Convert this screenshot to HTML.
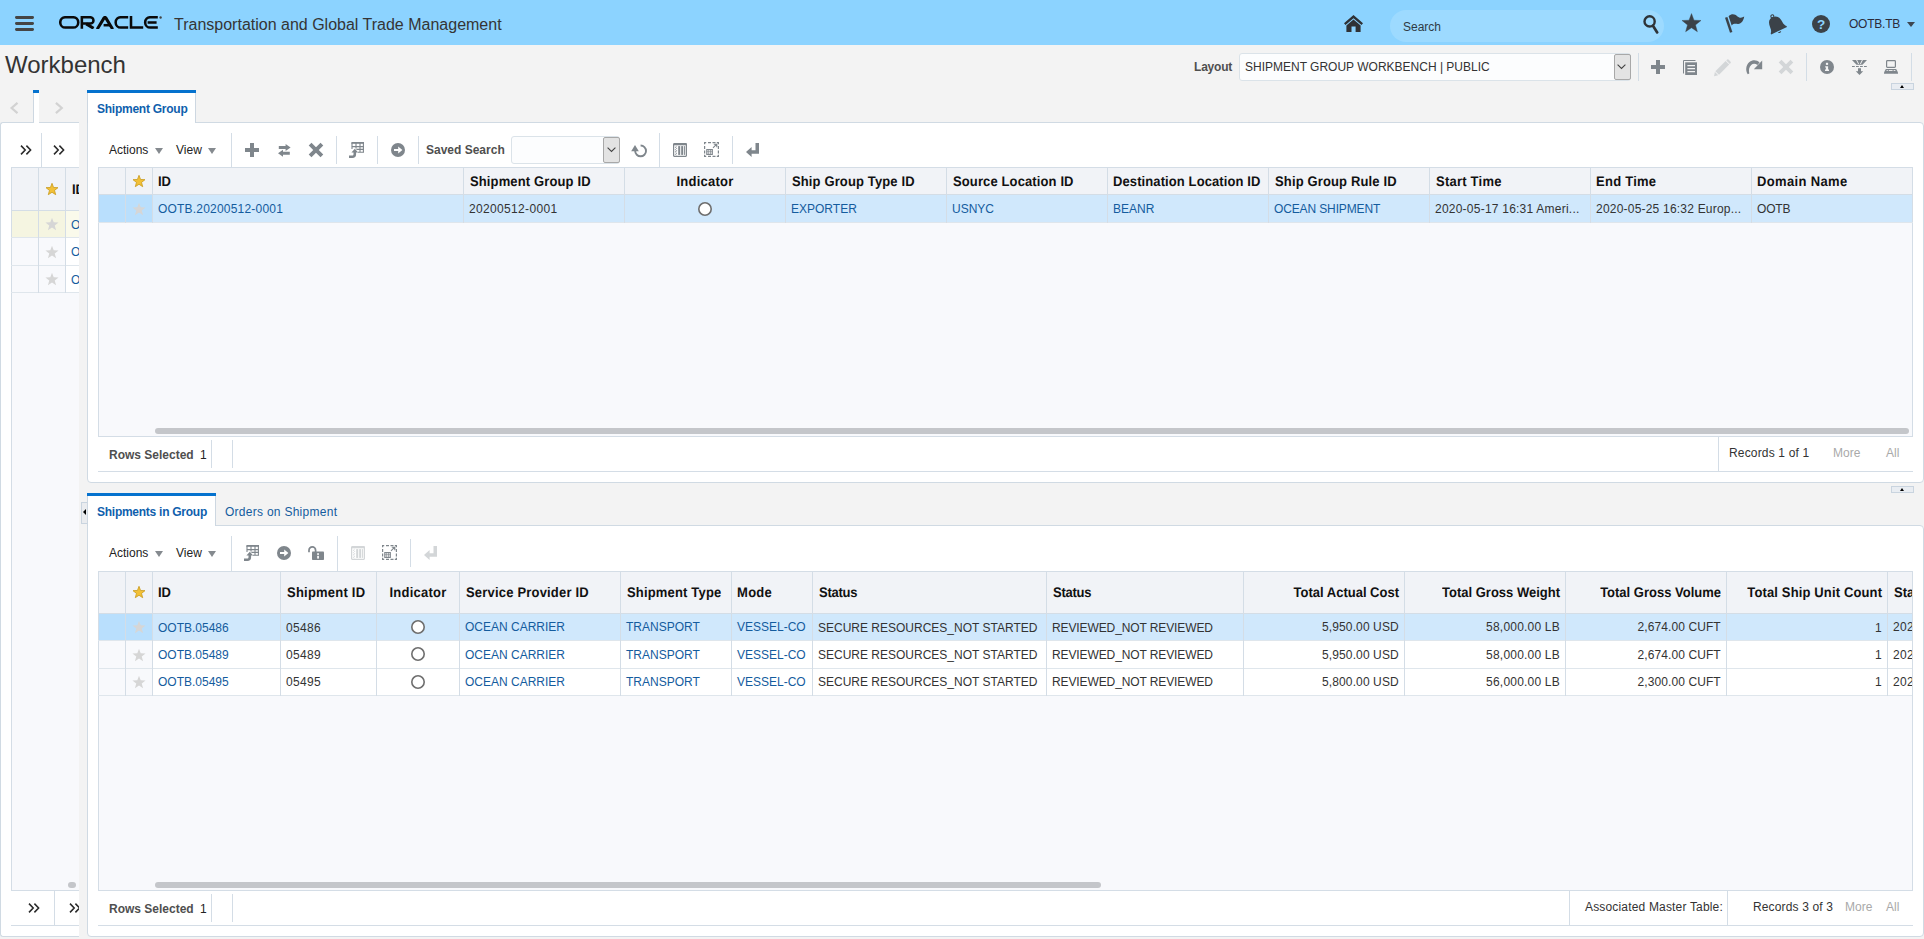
<!DOCTYPE html>
<html><head><meta charset="utf-8"><title>Workbench</title><style>
*{box-sizing:border-box}
html,body{margin:0;padding:0}
body{width:1924px;height:939px;overflow:hidden;background:#f3f3f3;font-family:"Liberation Sans",sans-serif;font-size:12px;color:#333;position:relative}
.a{position:absolute}
.t{position:absolute;white-space:nowrap;line-height:14px;height:14px}
.b{font-weight:bold}
.lk{color:#145c9e}
.h{position:absolute;height:1px;background:#d4dde6}
.v{position:absolute;width:1px;background:#d4dde6}
.hd{font-weight:bold;font-size:13px;color:#111;line-height:16px;height:16px;text-rendering:geometricPrecision;transform:scale(1,1.075);transform-origin:0 12.5px}
.panel{position:absolute;background:#fff;border:1px solid #d0dae3}
svg{position:absolute;overflow:visible}
.dis{color:#a9a9a9}
</style></head><body>
<div class="a" style="left:0px;top:0px;width:1924px;height:45px;background:#8cd3ff;"></div>
<svg style="left:15px;top:16px" width="19" height="15" viewBox="0 0 19 15"><rect x="0" y="0.1" width="19" height="2.8" rx="1.4" fill="#454545"/><rect x="0" y="6.1" width="19" height="2.8" rx="1.4" fill="#454545"/><rect x="0" y="12.1" width="19" height="2.8" rx="1.4" fill="#454545"/></svg>
<div class="a" style="left:59px;top:16px;width:104px;height:12.8px;overflow:hidden"><svg style="left:0px;top:0px" width="104" height="13" viewBox="0 0 104 13"><rect x="1.25" y="1.25" width="18" height="10.3" rx="5.15" fill="none" stroke="#0a0a0a" stroke-width="2.55"/><path d="M22.85 12.8V1.25H31.3a3.15 3.15 0 0 1 0 6.3H24" fill="none" stroke="#0a0a0a" stroke-width="2.55"/><path d="M27.2 7.9L34.6 12.3" fill="none" stroke="#0a0a0a" stroke-width="3"/><path d="M38.2 13.2L45.1 1.9a0.95 0.95 0 0 1 1.7 0L53.7 13.2" fill="none" stroke="#0a0a0a" stroke-width="3" stroke-linejoin="round"/><path d="M44.6 9.2H51.6" fill="none" stroke="#0a0a0a" stroke-width="2.55"/><path d="M69.2 1.25H61.8a5.15 5.15 0 0 0 0 10.3H69.2" fill="none" stroke="#0a0a0a" stroke-width="2.55"/><path d="M72 0V11.55H84.2" fill="none" stroke="#0a0a0a" stroke-width="2.55"/><path d="M98.8 1.25H91.3a5.15 5.15 0 0 0 0 10.3H98.8M88.6 6.4H97.6" fill="none" stroke="#0a0a0a" stroke-width="2.55"/><circle cx="101.6" cy="1.5" r="1.2" fill="#444"/></svg></div>
<div class="t " style="left:174px;top:14.5px;font-size:16px;line-height:20px;height:20px;color:#353535">Transportation and Global Trade Management</div>
<svg style="left:1344px;top:15px" width="19" height="17" viewBox="0 0 19 17"><path d="M9.5 0L0 8.2L1.5 10L9.5 3.2L17.5 10L19 8.2Z" fill="#2f3236"/><path d="M9.5 4.4L2.4 10.4V17H7.5V11.4H11.6V17H16.6V10.4Z" fill="#2f3236"/></svg>
<div class="a" style="left:1390px;top:10px;width:274px;height:32px;background:#9ddaff;border-radius:16px"></div>
<div class="t " style="left:1403px;top:19.5px;color:#2f3a44">Search</div>
<svg style="left:1643px;top:15px" width="16" height="19" viewBox="0 0 16 19"><circle cx="6.6" cy="6.4" r="5.1" fill="none" stroke="#2e3338" stroke-width="2.4"/><path d="M9.8 10.6L14.2 17.4" stroke="#2e3338" stroke-width="2.7" stroke-linecap="round"/></svg>
<svg style="left:1682px;top:14.3px" width="19" height="18" viewBox="0 0 19 18"><path d="M9.50 -0.40L11.97 6.20L19.01 6.51L13.49 10.90L15.38 17.69L9.50 13.80L3.62 17.69L5.51 10.90L-0.01 6.51L7.03 6.20Z" fill="#3b4249" stroke="#3b4249" stroke-width="0.4" stroke-linejoin="round"/></svg>
<svg style="left:1725px;top:14px" width="20" height="19" viewBox="0 0 20 19"><path d="M1.2 3.4L6.2 18.4" stroke="#3b4249" stroke-width="2.5" stroke-linecap="butt"/><path d="M3.6 2.2C7 -1 10 0.2 12.5 2.4C15 4.4 17.2 3.8 19.2 2.6C18.6 6.6 16.4 10 13 9.9C10.4 9.7 8.6 9.2 6.7 11.4Z" fill="#3b4249"/></svg>
<svg style="left:1769px;top:14px" width="19" height="19" viewBox="0 0 19 19"><g transform="translate(-2.6 -0.3) scale(1.09) rotate(-25 9 10)"><circle cx="9" cy="1.6" r="1.4" fill="none" stroke="#3b4249" stroke-width="1"/><path d="M9 2.4C4.4 2.4 3 6 2.9 10C2.8 12.6 2.2 14 1 15.2V16.2H17V15.2C15.8 14 15.2 12.6 15.1 10C15 6 13.6 2.4 9 2.4Z" fill="#3b4249"/><path d="M7.4 17.2a1.7 1.7 0 0 0 3.2 0Z" fill="#3b4249"/></g></svg>
<svg style="left:1812px;top:15px" width="18" height="18" viewBox="0 0 18 18"><circle cx="9" cy="9" r="9" fill="#3b4249"/><text x="9" y="13.6" font-family="Liberation Sans" font-weight="bold" font-size="13.5" text-anchor="middle" fill="#8cd3ff">?</text></svg>
<div class="t " style="left:1849px;top:17.0px;color:#2b2b3a;letter-spacing:-0.24px">OOTB.TB</div>
<div class="a" style="left:1906.8px;top:21.9px;width:0;height:0;border-left:4.7px solid transparent;border-right:4.7px solid transparent;border-top:5.2px solid #3d4650"></div>
<div class="t " style="left:5px;top:50.0px;font-size:24px;line-height:30px;height:30px;color:#333">Workbench</div>
<div class="t b" style="left:1194px;top:60.0px;color:#4f4f4f;letter-spacing:-0.2px">Layout</div>
<div class="a" style="left:1239px;top:53px;width:391.5px;height:28px;background:#fcfdfe;border:1px solid #dbe3e9;border-radius:3px"></div>
<div class="t " style="left:1245px;top:60.0px;color:#333">SHIPMENT GROUP WORKBENCH | PUBLIC</div>
<div class="a" style="left:1613.5px;top:54px;width:17px;height:26px;background:#e3e3e3;border:1px solid #a8a8a8;border-radius:2px"></div>
<svg style="left:1617.3px;top:64.2px" width="9" height="6" viewBox="0 0 9 6"><path d="M0.6 0.6L4.5 4.4L8.4 0.6" fill="none" stroke="#444" stroke-width="1.1"/></svg>
<div class="v" style="left:1637.5px;top:53px;height:28px;background:#d3dde6"></div>
<svg style="left:1651px;top:60px" width="14" height="14" viewBox="0 0 14 14"><rect x="5.0" y="0" width="4" height="14" fill="#7f868c"/><rect x="0" y="5.0" width="14" height="4" fill="#7f868c"/></svg>
<svg style="left:1683px;top:60px" width="14" height="15" viewBox="0 0 14 15"><path d="M0.5 13.5V0.5H12.5" fill="none" stroke="#7f868c" stroke-width="1"/><rect x="2.2" y="2.3" width="11.8" height="12.7" fill="#7f868c"/><path d="M4.4 5.6H12M4.4 8.6H12M4.4 11.6H12" stroke="#f3f3f3" stroke-width="1.3"/></svg>
<svg style="left:1714px;top:59.8px" width="17" height="17" viewBox="0 0 17 17"><path d="M11.6 1L15.2 4.6L5 14.8L1.4 11.2Z" fill="#d3d6d8"/><path d="M0.9 12L4.2 15.3L0 16.2Z" fill="#d3d6d8"/><path d="M12.3 0.4L13.1 -0.4a1 1 0 0 1 1.4 0L16.6 1.7a1 1 0 0 1 0 1.4L15.8 3.9Z" fill="#d3d6d8"/></svg>
<svg style="left:1746px;top:59.8px" width="17" height="15" viewBox="0 0 17 15"><path d="M1.7 14.3C-0.6 10.6 -0.3 5 3.4 2C6.6 -0.6 10.8 -0.4 13.6 2.4L11.4 5C9.6 3.5 7 3.3 5.2 4.9C3 6.9 2.5 10 3.3 13.4Z" fill="#7f868c"/><path d="M16.2 0.4V9.2H7.8Z" fill="#7f868c"/></svg>
<svg style="left:1779px;top:60px" width="14" height="14" viewBox="0 0 14 14"><path d="M1.1 1.1L12.9 12.9M12.9 1.1L1.1 12.9" stroke="#d3d6d8" stroke-width="3.9" fill="none"/></svg>
<div class="v" style="left:1806px;top:53px;height:28px;background:#d3dde6"></div>
<svg style="left:1820px;top:60px" width="14" height="14" viewBox="0 0 14 14"><circle cx="7" cy="7" r="7" fill="#7f868c"/><rect x="5.9" y="2.8" width="2.2" height="2.1" fill="#f3f3f3"/><path d="M5.2 6.2H8.1V9.6H9V10.9H5V9.6H5.9V7.5H5.2Z" fill="#f3f3f3"/></svg>
<svg style="left:1852px;top:60px" width="15" height="15" viewBox="0 0 15 15"><path d="M0 0H15L10.5 4.8H4.5Z" fill="#7f868c"/><path d="M4.6 0L6.6 4M10.4 0L8.4 4" fill="none" stroke="#f3f3f3" stroke-width="1"/><path d="M0 6.5H15" stroke="#7f868c" stroke-width="1.2" stroke-dasharray="2.8 1.2"/><path d="M6 8.2H9V11.2H11.2L7.5 15L3.8 11.2H6Z" fill="#7f868c"/></svg>
<svg style="left:1884px;top:60px" width="14" height="14" viewBox="0 0 14 14"><rect x="2.6" y="0.6" width="8.8" height="6.8" rx="0.8" fill="none" stroke="#7f868c" stroke-width="1.2"/><path d="M1.8 9H12.2L14 12.6V13.8H0V12.6Z" fill="#7f868c"/><path d="M2.6 10.5H3.8M4.8 10.5H8.6M9.6 10.5H11.4" stroke="#f3f3f3" stroke-width="0.9"/></svg>
<div class="v" style="left:1911px;top:53px;height:28px;background:#d3dde6"></div>
<div class="a" style="left:1891px;top:83px;width:23px;height:7px;background:#e9edf2;border:1px solid #c9d4df"></div>
<div class="a" style="left:1900px;top:84.8px;width:0;height:0;border-left:2.8px solid transparent;border-right:2.8px solid transparent;border-bottom:3.2px solid #000"></div>
<div class="a" style="left:1891px;top:486px;width:23px;height:7px;background:#e9edf2;border:1px solid #c9d4df"></div>
<div class="a" style="left:1900px;top:487.8px;width:0;height:0;border-left:2.8px solid transparent;border-right:2.8px solid transparent;border-bottom:3.2px solid #000"></div>
<svg style="left:10px;top:102px" width="9" height="12" viewBox="0 0 9 12"><path d="M7.5 0.8L1.6 6L7.5 11.2" fill="none" stroke="#d2d2d2" stroke-width="2.2"/></svg>
<svg style="left:55px;top:102px" width="9" height="12" viewBox="0 0 9 12"><path d="M0.9 0.8L6.8 6L0.9 11.2" fill="none" stroke="#d2d2d2" stroke-width="2.2"/></svg>
<div class="a" style="left:33px;top:90px;width:6px;height:33px;background:#fff;border-left:1px solid #cdd7e1"></div>
<div class="a" style="left:33px;top:90px;width:6px;height:3px;background:#0572ce;"></div>
<div class="panel" style="left:0px;top:122px;width:79px;height:815px;border-right:none;border-radius:3px 0 0 3px"></div>
<div class="a" style="left:34px;top:122px;width:5px;height:1px;background:#fff;"></div>
<div class="a" style="left:2px;top:123px;width:77px;height:813px;overflow:hidden">
</div>
<div class="panel" style="left:87px;top:122px;width:1837px;height:361px;border-radius:0 4px 4px 4px"></div>
<div class="a" style="left:87px;top:90px;width:109px;height:33px;background:#fff;border-left:1px solid #cdd7e1;border-right:1px solid #cdd7e1"></div>
<div class="a" style="left:87px;top:90px;width:109px;height:3px;background:#0572ce;"></div>
<div class="t b" style="left:97px;top:101.5px;color:#0f5fad;letter-spacing:-0.25px">Shipment Group</div>
<div class="panel" style="left:87px;top:525px;width:1837px;height:412px;border-radius:0 4px 4px 4px"></div>
<div class="a" style="left:87px;top:493px;width:129px;height:33px;background:#fff;border-left:1px solid #cdd7e1;border-right:1px solid #cdd7e1"></div>
<div class="a" style="left:87px;top:493px;width:129px;height:3px;background:#0572ce;"></div>
<div class="t b" style="left:97px;top:504.5px;color:#0f5fad;letter-spacing:-0.26px">Shipments in Group</div>
<div class="t lk" style="left:225px;top:504.5px;;letter-spacing:0.27px">Orders on Shipment</div>
<div class="a" style="left:81px;top:502px;width:6px;height:22px;background:#eaecef;border:1px solid #c9d4df;border-right:none"></div>
<div class="a" style="left:83px;top:509.2px;width:0;height:0;border-top:3.5px solid transparent;border-bottom:3.5px solid transparent;border-right:3.5px solid #000"></div>
<div class="t " style="left:109px;top:143.0px;color:#222">Actions</div>
<div class="a" style="left:155px;top:148px;width:0;height:0;border-left:4.8px solid transparent;border-right:4.8px solid transparent;border-top:6px solid #858a8f"></div>
<div class="t " style="left:176px;top:143.0px;color:#222">View</div>
<div class="a" style="left:207.5px;top:148px;width:0;height:0;border-left:4.8px solid transparent;border-right:4.8px solid transparent;border-top:6px solid #858a8f"></div>
<div class="v" style="left:231px;top:133px;height:35px"></div>
<svg style="left:245px;top:143px" width="14" height="14" viewBox="0 0 14 14"><rect x="5.0" y="0" width="4" height="14" fill="#7f868c"/><rect x="0" y="5.0" width="14" height="4" fill="#7f868c"/></svg>
<svg style="left:278px;top:144px" width="13" height="13" viewBox="0 0 13 13"><path d="M0.8 2H7.6V0L12.6 3.5L7.6 7V5H0.8Z" fill="#7f868c"/><path d="M11.8 7.8H5V5.8L0 9.3L5 12.8V10.8H11.8Z" fill="#7f868c"/></svg>
<svg style="left:309px;top:143px" width="14" height="14" viewBox="0 0 14 14"><path d="M1.1 1.1L12.9 12.9M12.9 1.1L1.1 12.9" stroke="#7f868c" stroke-width="3.9" fill="none"/></svg>
<div class="v" style="left:336px;top:136px;height:28px"></div>
<svg style="left:349px;top:142px" width="15" height="16" viewBox="0 0 15 16"><rect x="2.4" y="0" width="12.6" height="1.8" fill="#7f868c"/><path d="M3 1V7M7 1V6.6M11 1V10.4M14.4 1V10.4M2.4 4.6H15M7.4 7.4H15M9 10.3H15" fill="none" stroke="#7f868c" stroke-width="1.1"/><path d="M0 13.6H3C4.2 13.6 4.5 13 4.5 12V10.4H2.4L5.8 6.8L9.2 10.4H7.1V12.2C7.1 14.8 5.8 16 3.4 16H0Z" fill="#7f868c"/></svg>
<div class="v" style="left:377px;top:136px;height:28px"></div>
<svg style="left:391px;top:143px" width="14" height="14" viewBox="0 0 14 14"><circle cx="7" cy="7" r="7" fill="#7f868c"/><path d="M3 5.9H7.2V3.4L11.4 7L7.2 10.6V8.1H3Z" fill="#fff"/></svg>
<div class="v" style="left:418px;top:136px;height:28px"></div>
<div class="t b" style="left:426px;top:143.0px;color:#4f4f4f">Saved Search</div>
<div class="a" style="left:511px;top:136px;width:109px;height:28px;background:#fcfdfe;border:1px solid #dbe3e9;border-radius:3px"></div>
<div class="a" style="left:603px;top:137px;width:17px;height:26px;background:#e3e3e3;border:1px solid #a8a8a8;border-radius:2px"></div>
<svg style="left:606.8px;top:147.2px" width="9" height="6" viewBox="0 0 9 6"><path d="M0.6 0.6L4.5 4.4L8.4 0.6" fill="none" stroke="#444" stroke-width="1.1"/></svg>
<svg style="left:631px;top:143.5px" width="16" height="14" viewBox="0 0 16 14"><path d="M9.6 1.5A5.4 5.4 0 1 1 4.2 6.9" fill="none" stroke="#7f868c" stroke-width="1.9"/><path d="M0.2 7.2L4 1.1L7.8 7.2Z" fill="#7f868c"/></svg>
<div class="v" style="left:659px;top:133px;height:35px"></div>
<svg style="left:673px;top:143px" width="14" height="14" viewBox="0 0 14 14"><rect x="0.6" y="0.6" width="12.8" height="12.7" rx="0.7" fill="none" stroke="#7f868c" stroke-width="1.2"/><rect x="0.6" y="0.4" width="12.8" height="1.9" fill="#7f868c"/><rect x="5.2" y="3.1" width="2" height="8.8" fill="#7f868c"/><rect x="8.2" y="3.1" width="2" height="8.8" fill="#7f868c"/><rect x="11.1" y="3.1" width="1" height="8.8" fill="#7f868c"/><path d="M3.6 3.2L2.4 4.2L3.6 5.4L2.4 6.6L3.6 7.8L2.4 9L3.6 10.2L2.4 11.4L3.4 12" fill="none" stroke="#7f868c" stroke-width="0.9"/></svg>
<svg style="left:704px;top:142px" width="15" height="15" viewBox="0 0 15 15"><path d="M0 0.6H2.2M4 0.6H7M8.5 0.6H11.5M12.8 0.6H15M0 14.4H2.2M4 14.4H7M8.5 14.4H11.5M12.8 14.4H15M0.6 0V2.2M0.6 4V7M0.6 8.5V11.5M0.6 12.8V15M14.4 0V2.2M14.4 4V7M14.4 8.5V11.5M14.4 12.8V15" fill="none" stroke="#7f868c" stroke-width="1.2"/><path d="M9 5.8L12.4 2.4M9.8 2.2H12.8V5.2" fill="none" stroke="#7f868c" stroke-width="1.1"/><rect x="2.8" y="7.6" width="5.5" height="4.8" fill="none" stroke="#7f868c" stroke-width="1.15"/><path d="M4.65 7.6V12.4M6.5 7.6V12.4M2.8 9.7H8.3" stroke="#7f868c" stroke-width="0.7"/></svg>
<div class="v" style="left:732px;top:136px;height:28px"></div>
<svg style="left:746px;top:143px" width="13" height="14" viewBox="0 0 13 14"><path d="M9.5 0H13V10.8H5.6V14L0 9L5.6 4V7.3H9.5Z" fill="#7f868c"/></svg>
<div class="a" style="left:98px;top:167px;width:1815px;height:270px;background:#f8f9fc;border:1px solid #d4dde6"></div>
<div class="a" style="left:99px;top:168px;width:1813px;height:26px;background:#f1f3f7;"></div>
<div class="a" style="left:99px;top:195px;width:54px;height:27px;background:#b9dffd;"></div>
<div class="a" style="left:153px;top:195px;width:1759px;height:27px;background:#d0e8fc;"></div>
<div class="h" style="left:98px;top:194px;width:1815px"></div>
<div class="h" style="left:98px;top:222px;width:1815px;background:#dfe6ec"></div>
<div class="v" style="left:125px;top:167px;height:56px"></div>
<div class="v" style="left:152px;top:167px;height:56px"></div>
<div class="v" style="left:463px;top:167px;height:56px"></div>
<div class="v" style="left:624px;top:167px;height:56px"></div>
<div class="v" style="left:785px;top:167px;height:56px"></div>
<div class="v" style="left:946px;top:167px;height:56px"></div>
<div class="v" style="left:1107px;top:167px;height:56px"></div>
<div class="v" style="left:1268px;top:167px;height:56px"></div>
<div class="v" style="left:1429px;top:167px;height:56px"></div>
<div class="v" style="left:1590px;top:167px;height:56px"></div>
<div class="v" style="left:1751px;top:167px;height:56px"></div>
<svg style="left:132px;top:174px" width="14" height="14" viewBox="0 0 14 14"><path d="M7.00 1.30L8.56 5.46L12.99 5.65L9.52 8.42L10.70 12.70L7.00 10.25L3.30 12.70L4.48 8.42L1.01 5.65L5.44 5.46Z" fill="#f2c037" stroke="#c99a1c" stroke-width="0.8"/></svg>
<svg style="left:132px;top:201.5px" width="14" height="14" viewBox="0 0 14 14"><path d="M7.00 0.70L8.70 5.26L13.56 5.47L9.76 8.50L11.06 13.18L7.00 10.50L2.94 13.18L4.24 8.50L0.44 5.47L5.30 5.26Z" fill="#d6d6d6"/></svg>
<div class="t hd" style="left:158px;top:174.0px;">ID</div>
<div class="t hd" style="left:470px;top:174.0px;;letter-spacing:0.13px">Shipment Group ID</div>
<div class="t hd" style="left:792px;top:174.0px;;letter-spacing:0.13px">Ship Group Type ID</div>
<div class="t hd" style="left:953px;top:174.0px;;letter-spacing:0.12px">Source Location ID</div>
<div class="t hd" style="left:1113px;top:174.0px;;letter-spacing:0.1px">Destination Location ID</div>
<div class="t hd" style="left:1275px;top:174.0px;;letter-spacing:0.14px">Ship Group Rule ID</div>
<div class="t hd" style="left:1436px;top:174.0px;;letter-spacing:0.23px">Start Time</div>
<div class="t hd" style="left:1596px;top:174.0px;;letter-spacing:0.26px">End Time</div>
<div class="t hd" style="left:1757px;top:174.0px;;letter-spacing:0.35px">Domain Name</div>
<div class="t hd hdc" style="left:624px;width:162px;text-align:center;top:174px;letter-spacing:0.26px">Indicator</div>
<div class="t lk" style="left:158px;top:201.5px;;letter-spacing:0.2px">OOTB.20200512-0001</div>
<div class="t " style="left:469px;top:201.5px;;letter-spacing:0.34px">20200512-0001</div>
<svg style="left:698px;top:201.8px" width="14" height="14" viewBox="0 0 14 14"><circle cx="7" cy="7" r="6.2" fill="#fff" stroke="#6e6e6e" stroke-width="1.6"/></svg>
<div class="t lk" style="left:791px;top:201.5px;">EXPORTER</div>
<div class="t lk" style="left:952px;top:201.5px;">USNYC</div>
<div class="t lk" style="left:1113px;top:201.5px;">BEANR</div>
<div class="t lk" style="left:1274px;top:201.5px;;letter-spacing:-0.13px">OCEAN SHIPMENT</div>
<div class="t " style="left:1435px;top:201.5px;;letter-spacing:0.23px">2020-05-17 16:31 Ameri...</div>
<div class="t " style="left:1596px;top:201.5px;;letter-spacing:0.21px">2020-05-25 16:32 Europ...</div>
<div class="t " style="left:1757px;top:201.5px;;letter-spacing:-0.15px">OOTB</div>
<div class="a" style="left:155px;top:428px;width:1754px;height:6px;background:#c4c6ca;border-radius:3px"></div>
<div class="t b" style="left:109px;top:448.0px;color:#4f4f4f">Rows Selected</div>
<div class="t " style="left:200px;top:448.0px;color:#222">1</div>
<div class="v" style="left:211px;top:440px;height:28px"></div>
<div class="v" style="left:232px;top:440px;height:28px"></div>
<div class="v" style="left:1718px;top:437px;height:35px"></div>
<div class="t " style="left:1729px;top:445.6px;color:#333;letter-spacing:0.16px">Records 1 of 1</div>
<div class="t dis" style="left:1833px;top:445.6px;">More</div>
<div class="t dis" style="left:1886px;top:445.6px;">All</div>
<div class="h" style="left:98px;top:471px;width:1815px"></div>
<div class="t " style="left:109px;top:546.0px;color:#222">Actions</div>
<div class="a" style="left:155px;top:551px;width:0;height:0;border-left:4.8px solid transparent;border-right:4.8px solid transparent;border-top:6px solid #858a8f"></div>
<div class="t " style="left:176px;top:546.0px;color:#222">View</div>
<div class="a" style="left:207.5px;top:551px;width:0;height:0;border-left:4.8px solid transparent;border-right:4.8px solid transparent;border-top:6px solid #858a8f"></div>
<div class="v" style="left:231px;top:536px;height:35px"></div>
<svg style="left:244px;top:545px" width="15" height="16" viewBox="0 0 15 16"><rect x="2.4" y="0" width="12.6" height="1.8" fill="#7f868c"/><path d="M3 1V7M7 1V6.6M11 1V10.4M14.4 1V10.4M2.4 4.6H15M7.4 7.4H15M9 10.3H15" fill="none" stroke="#7f868c" stroke-width="1.1"/><path d="M0 13.6H3C4.2 13.6 4.5 13 4.5 12V10.4H2.4L5.8 6.8L9.2 10.4H7.1V12.2C7.1 14.8 5.8 16 3.4 16H0Z" fill="#7f868c"/></svg>
<svg style="left:277px;top:546px" width="14" height="14" viewBox="0 0 14 14"><circle cx="7" cy="7" r="7" fill="#7f868c"/><path d="M3 5.9H7.2V3.4L11.4 7L7.2 10.6V8.1H3Z" fill="#fff"/></svg>
<svg style="left:308px;top:546px" width="16" height="14" viewBox="0 0 16 14"><path d="M1 6.2V4.2A3.3 3.3 0 0 1 7.6 4.2V6" fill="none" stroke="#7f868c" stroke-width="1.7"/><rect x="4" y="5.6" width="12" height="8.4" rx="0.8" fill="#7f868c"/><rect x="9.2" y="7.2" width="1.7" height="1.7" fill="#fff"/><rect x="9.2" y="9.8" width="1.7" height="2.8" fill="#fff"/></svg>
<div class="v" style="left:337px;top:536px;height:35px"></div>
<svg style="left:351px;top:546px" width="14" height="14" viewBox="0 0 14 14"><rect x="0.6" y="0.6" width="12.8" height="12.7" rx="0.7" fill="none" stroke="#d3d6d8" stroke-width="1.2"/><rect x="0.6" y="0.4" width="12.8" height="1.9" fill="#d3d6d8"/><rect x="5.2" y="3.1" width="2" height="8.8" fill="#d3d6d8"/><rect x="8.2" y="3.1" width="2" height="8.8" fill="#d3d6d8"/><rect x="11.1" y="3.1" width="1" height="8.8" fill="#d3d6d8"/><path d="M3.6 3.2L2.4 4.2L3.6 5.4L2.4 6.6L3.6 7.8L2.4 9L3.6 10.2L2.4 11.4L3.4 12" fill="none" stroke="#d3d6d8" stroke-width="0.9"/></svg>
<svg style="left:382px;top:545px" width="15" height="15" viewBox="0 0 15 15"><path d="M0 0.6H2.2M4 0.6H7M8.5 0.6H11.5M12.8 0.6H15M0 14.4H2.2M4 14.4H7M8.5 14.4H11.5M12.8 14.4H15M0.6 0V2.2M0.6 4V7M0.6 8.5V11.5M0.6 12.8V15M14.4 0V2.2M14.4 4V7M14.4 8.5V11.5M14.4 12.8V15" fill="none" stroke="#7f868c" stroke-width="1.2"/><path d="M9 5.8L12.4 2.4M9.8 2.2H12.8V5.2" fill="none" stroke="#7f868c" stroke-width="1.1"/><rect x="2.8" y="7.6" width="5.5" height="4.8" fill="none" stroke="#7f868c" stroke-width="1.15"/><path d="M4.65 7.6V12.4M6.5 7.6V12.4M2.8 9.7H8.3" stroke="#7f868c" stroke-width="0.7"/></svg>
<div class="v" style="left:410px;top:539px;height:28px"></div>
<svg style="left:424px;top:546px" width="13" height="14" viewBox="0 0 13 14"><path d="M9.5 0H13V10.8H5.6V14L0 9L5.6 4V7.3H9.5Z" fill="#d3d6d8"/></svg>
<div class="a" style="left:98px;top:571px;width:1815px;height:320px;background:#f8f9fc;border:1px solid #d4dde6"></div>
<div class="a" style="left:99px;top:572px;width:1813px;height:41px;background:#f1f3f7;"></div>
<div class="a" style="left:99px;top:614px;width:54px;height:26px;background:#b9dffd;"></div>
<div class="a" style="left:153px;top:614px;width:1759px;height:26px;background:#d0e8fc;"></div>
<div class="a" style="left:99px;top:641px;width:54px;height:27px;background:#f8f9fc;"></div>
<div class="a" style="left:153px;top:641px;width:1759px;height:27px;background:#fff;"></div>
<div class="a" style="left:99px;top:669px;width:54px;height:26px;background:#f8f9fc;"></div>
<div class="a" style="left:153px;top:669px;width:1759px;height:26px;background:#fff;"></div>
<div class="h" style="left:98px;top:613px;width:1815px"></div>
<div class="h" style="left:98px;top:640px;width:1815px;background:#dfe6ec"></div>
<div class="h" style="left:98px;top:668px;width:1815px;background:#dfe6ec"></div>
<div class="h" style="left:98px;top:695px;width:1815px;background:#dfe6ec"></div>
<div class="v" style="left:125px;top:571px;height:125px"></div>
<div class="v" style="left:152px;top:571px;height:125px"></div>
<div class="v" style="left:280px;top:571px;height:125px"></div>
<div class="v" style="left:376px;top:571px;height:125px"></div>
<div class="v" style="left:459px;top:571px;height:125px"></div>
<div class="v" style="left:620px;top:571px;height:125px"></div>
<div class="v" style="left:731px;top:571px;height:125px"></div>
<div class="v" style="left:812px;top:571px;height:125px"></div>
<div class="v" style="left:1046px;top:571px;height:125px"></div>
<div class="v" style="left:1243px;top:571px;height:125px"></div>
<div class="v" style="left:1404px;top:571px;height:125px"></div>
<div class="v" style="left:1565px;top:571px;height:125px"></div>
<div class="v" style="left:1726px;top:571px;height:125px"></div>
<div class="v" style="left:1887px;top:571px;height:125px"></div>
<svg style="left:132px;top:585px" width="14" height="14" viewBox="0 0 14 14"><path d="M7.00 1.30L8.56 5.46L12.99 5.65L9.52 8.42L10.70 12.70L7.00 10.25L3.30 12.70L4.48 8.42L1.01 5.65L5.44 5.46Z" fill="#f2c037" stroke="#c99a1c" stroke-width="0.8"/></svg>
<div class="t hd" style="left:158px;top:585.0px;">ID</div>
<div class="t hd" style="left:287px;top:585.0px;;letter-spacing:0.22px">Shipment ID</div>
<div class="t hd" style="left:466px;top:585.0px;;letter-spacing:0.19px">Service Provider ID</div>
<div class="t hd" style="left:627px;top:585.0px;;letter-spacing:0.17px">Shipment Type</div>
<div class="t hd" style="left:737px;top:585.0px;;letter-spacing:0.3px">Mode</div>
<div class="t hd" style="left:819px;top:585.0px;;letter-spacing:-0.27px">Status</div>
<div class="t hd" style="left:1053px;top:585.0px;;letter-spacing:-0.27px">Status</div>
<div class="t hd" style="left:1894px;top:585.0px;">Sta</div>
<div class="t hd hdc" style="left:376px;width:84px;text-align:center;top:585px;letter-spacing:0.26px">Indicator</div>
<div class="t hd hdr" style="right:525px;top:585.0px;">Total Actual Cost</div>
<div class="t hd hdr" style="right:364px;top:585.0px;">Total Gross Weight</div>
<div class="t hd hdr" style="right:203px;top:585.0px;">Total Gross Volume</div>
<div class="t hd hdr" style="right:41.86px;top:585.0px;;letter-spacing:0.14px">Total Ship Unit Count</div>
<svg style="left:132px;top:620px" width="14" height="14" viewBox="0 0 14 14"><path d="M7.00 0.70L8.70 5.26L13.56 5.47L9.76 8.50L11.06 13.18L7.00 10.50L2.94 13.18L4.24 8.50L0.44 5.47L5.30 5.26Z" fill="#d6d6d6"/></svg>
<div class="t lk" style="left:158px;top:620.5px;">OOTB.05486</div>
<div class="t " style="left:286px;top:620.5px;;letter-spacing:0.33px">05486</div>
<svg style="left:411px;top:619.8px" width="14" height="14" viewBox="0 0 14 14"><circle cx="7" cy="7" r="6.2" fill="#fff" stroke="#6e6e6e" stroke-width="1.6"/></svg>
<div class="t lk" style="left:465px;top:619.5px;">OCEAN CARRIER</div>
<div class="t lk" style="left:626px;top:619.5px;">TRANSPORT</div>
<div class="t lk" style="left:737px;top:619.5px;">VESSEL-CO</div>
<div class="t " style="left:818px;top:620.5px;">SECURE RESOURCES_NOT STARTED</div>
<div class="t " style="left:1052px;top:620.5px;;letter-spacing:-0.11px">REVIEWED_NOT REVIEWED</div>
<div class="t " style="right:525.18px;top:619.5px;;letter-spacing:0.12px">5,950.00 USD</div>
<div class="t " style="right:364.09999999999997px;top:619.5px;;letter-spacing:0.2px">58,000.00 LB</div>
<div class="t " style="right:203.20999999999995px;top:619.5px;;letter-spacing:0.09px">2,674.00 CUFT</div>
<div class="t " style="right:42.299999999999955px;top:620.5px;">1</div>
<div class="t " style="left:1893px;top:619.5px;;letter-spacing:0.33px">202</div>
<svg style="left:132px;top:647.5px" width="14" height="14" viewBox="0 0 14 14"><path d="M7.00 0.70L8.70 5.26L13.56 5.47L9.76 8.50L11.06 13.18L7.00 10.50L2.94 13.18L4.24 8.50L0.44 5.47L5.30 5.26Z" fill="#d6d6d6"/></svg>
<div class="t lk" style="left:158px;top:648.0px;">OOTB.05489</div>
<div class="t " style="left:286px;top:648.0px;;letter-spacing:0.33px">05489</div>
<svg style="left:411px;top:647.3px" width="14" height="14" viewBox="0 0 14 14"><circle cx="7" cy="7" r="6.2" fill="#fff" stroke="#6e6e6e" stroke-width="1.6"/></svg>
<div class="t lk" style="left:465px;top:648.0px;">OCEAN CARRIER</div>
<div class="t lk" style="left:626px;top:648.0px;">TRANSPORT</div>
<div class="t lk" style="left:737px;top:648.0px;">VESSEL-CO</div>
<div class="t " style="left:818px;top:648.0px;">SECURE RESOURCES_NOT STARTED</div>
<div class="t " style="left:1052px;top:648.0px;;letter-spacing:-0.11px">REVIEWED_NOT REVIEWED</div>
<div class="t " style="right:525.18px;top:648.0px;;letter-spacing:0.12px">5,950.00 USD</div>
<div class="t " style="right:364.09999999999997px;top:648.0px;;letter-spacing:0.2px">58,000.00 LB</div>
<div class="t " style="right:203.20999999999995px;top:648.0px;;letter-spacing:0.09px">2,674.00 CUFT</div>
<div class="t " style="right:42.299999999999955px;top:648.0px;">1</div>
<div class="t " style="left:1893px;top:648.0px;;letter-spacing:0.33px">202</div>
<svg style="left:132px;top:674.5px" width="14" height="14" viewBox="0 0 14 14"><path d="M7.00 0.70L8.70 5.26L13.56 5.47L9.76 8.50L11.06 13.18L7.00 10.50L2.94 13.18L4.24 8.50L0.44 5.47L5.30 5.26Z" fill="#d6d6d6"/></svg>
<div class="t lk" style="left:158px;top:674.6px;">OOTB.05495</div>
<div class="t " style="left:286px;top:674.6px;;letter-spacing:0.33px">05495</div>
<svg style="left:411px;top:674.8px" width="14" height="14" viewBox="0 0 14 14"><circle cx="7" cy="7" r="6.2" fill="#fff" stroke="#6e6e6e" stroke-width="1.6"/></svg>
<div class="t lk" style="left:465px;top:674.6px;">OCEAN CARRIER</div>
<div class="t lk" style="left:626px;top:674.6px;">TRANSPORT</div>
<div class="t lk" style="left:737px;top:674.6px;">VESSEL-CO</div>
<div class="t " style="left:818px;top:674.6px;">SECURE RESOURCES_NOT STARTED</div>
<div class="t " style="left:1052px;top:674.6px;;letter-spacing:-0.11px">REVIEWED_NOT REVIEWED</div>
<div class="t " style="right:525.18px;top:674.6px;;letter-spacing:0.12px">5,800.00 USD</div>
<div class="t " style="right:364.09999999999997px;top:674.6px;;letter-spacing:0.2px">56,000.00 LB</div>
<div class="t " style="right:203.20999999999995px;top:674.6px;;letter-spacing:0.09px">2,300.00 CUFT</div>
<div class="t " style="right:42.299999999999955px;top:674.6px;">1</div>
<div class="t " style="left:1893px;top:674.6px;;letter-spacing:0.33px">202</div>
<div class="a" style="left:1912px;top:572px;width:11px;height:124px;background:#fff;"></div>
<div class="v" style="left:1912px;top:571px;height:125px"></div>
<div class="a" style="left:155px;top:882px;width:946px;height:6px;background:#c4c6ca;border-radius:3px"></div>
<div class="t b" style="left:109px;top:901.5px;color:#4f4f4f">Rows Selected</div>
<div class="t " style="left:200px;top:901.5px;color:#222">1</div>
<div class="v" style="left:211px;top:894px;height:28px"></div>
<div class="v" style="left:232px;top:894px;height:28px"></div>
<div class="v" style="left:1569px;top:891px;height:35px"></div>
<div class="v" style="left:1727px;top:891px;height:35px"></div>
<div class="t " style="left:1585px;top:900.0px;color:#333;letter-spacing:0.17px">Associated Master Table:</div>
<div class="t " style="left:1753px;top:900.0px;color:#333;letter-spacing:0.14px">Records 3 of 3</div>
<div class="t dis" style="left:1845px;top:900.0px;">More</div>
<div class="t dis" style="left:1886px;top:900.0px;">All</div>
<div class="h" style="left:98px;top:925px;width:1815px"></div>
<svg style="left:20.2px;top:145px" width="12" height="10" viewBox="0 0 12 10"><path d="M1 0.6L5.2 5L1 9.4M6.4 0.6L10.6 5L6.4 9.4" fill="none" stroke="#2a2a2a" stroke-width="1.55"/></svg>
<svg style="left:53.2px;top:145px" width="12" height="10" viewBox="0 0 12 10"><path d="M1 0.6L5.2 5L1 9.4M6.4 0.6L10.6 5L6.4 9.4" fill="none" stroke="#2a2a2a" stroke-width="1.55"/></svg>
<div class="v" style="left:41px;top:133px;height:35px"></div>
<div class="a" style="left:0;top:0;width:79px;height:939px;overflow:hidden">
<div class="a" style="left:11px;top:167px;width:120px;height:724px;background:#f8f9fc;border:1px solid #d4dde6"></div>
<div class="a" style="left:12px;top:168px;width:119px;height:42px;background:#f1f3f7;"></div>
<div class="a" style="left:12px;top:211px;width:54px;height:26px;background:#f5f5e1;"></div>
<div class="a" style="left:66px;top:211px;width:60px;height:26px;background:#fafaeb;"></div>
<div class="a" style="left:12px;top:238px;width:54px;height:27px;background:#f8f9fc;"></div>
<div class="a" style="left:66px;top:238px;width:60px;height:27px;background:#fff;"></div>
<div class="a" style="left:12px;top:266px;width:54px;height:26px;background:#f8f9fc;"></div>
<div class="a" style="left:66px;top:266px;width:60px;height:26px;background:#fff;"></div>
<div class="h" style="left:11px;top:210px;width:120px"></div>
<div class="h" style="left:11px;top:237px;width:120px;background:#dfe6ec"></div>
<div class="h" style="left:11px;top:265px;width:120px;background:#dfe6ec"></div>
<div class="h" style="left:11px;top:292px;width:120px;background:#dfe6ec"></div>
<div class="v" style="left:38px;top:167px;height:126px"></div>
<div class="v" style="left:65px;top:167px;height:126px"></div>
<svg style="left:45px;top:182px" width="14" height="14" viewBox="0 0 14 14"><path d="M7.00 1.30L8.56 5.46L12.99 5.65L9.52 8.42L10.70 12.70L7.00 10.25L3.30 12.70L4.48 8.42L1.01 5.65L5.44 5.46Z" fill="#f2c037" stroke="#c99a1c" stroke-width="0.8"/></svg>
<div class="t hd" style="left:72px;top:182.0px;">ID</div>
<svg style="left:45px;top:217.0px" width="14" height="14" viewBox="0 0 14 14"><path d="M7.00 0.70L8.70 5.26L13.56 5.47L9.76 8.50L11.06 13.18L7.00 10.50L2.94 13.18L4.24 8.50L0.44 5.47L5.30 5.26Z" fill="#d6d6d6"/></svg>
<div class="t lk" style="left:71px;top:217.5px;;letter-spacing:-0.15px">OOTB</div>
<svg style="left:45px;top:244.5px" width="14" height="14" viewBox="0 0 14 14"><path d="M7.00 0.70L8.70 5.26L13.56 5.47L9.76 8.50L11.06 13.18L7.00 10.50L2.94 13.18L4.24 8.50L0.44 5.47L5.30 5.26Z" fill="#d6d6d6"/></svg>
<div class="t lk" style="left:71px;top:245.0px;;letter-spacing:-0.15px">OOTB</div>
<svg style="left:45px;top:272.0px" width="14" height="14" viewBox="0 0 14 14"><path d="M7.00 0.70L8.70 5.26L13.56 5.47L9.76 8.50L11.06 13.18L7.00 10.50L2.94 13.18L4.24 8.50L0.44 5.47L5.30 5.26Z" fill="#d6d6d6"/></svg>
<div class="t lk" style="left:71px;top:272.5px;;letter-spacing:-0.15px">OOTB</div>
<div class="a" style="left:68px;top:882px;width:8px;height:6px;background:#c4c6ca;border-radius:3px"></div>
</div>
<svg style="left:28px;top:903px" width="12" height="10" viewBox="0 0 12 10"><path d="M1 0.6L5.2 5L1 9.4M6.4 0.6L10.6 5L6.4 9.4" fill="none" stroke="#2a2a2a" stroke-width="1.55"/></svg>
<div class="a" style="left:0;top:0;width:79px;height:939px;overflow:hidden">
<svg style="left:69px;top:903px" width="12" height="10" viewBox="0 0 12 10"><path d="M1 0.6L5.2 5L1 9.4M6.4 0.6L10.6 5L6.4 9.4" fill="none" stroke="#2a2a2a" stroke-width="1.55"/></svg>
</div>
<div class="v" style="left:54px;top:891px;height:35px"></div>
<div class="h" style="left:11px;top:925px;width:68px"></div>
</body></html>
